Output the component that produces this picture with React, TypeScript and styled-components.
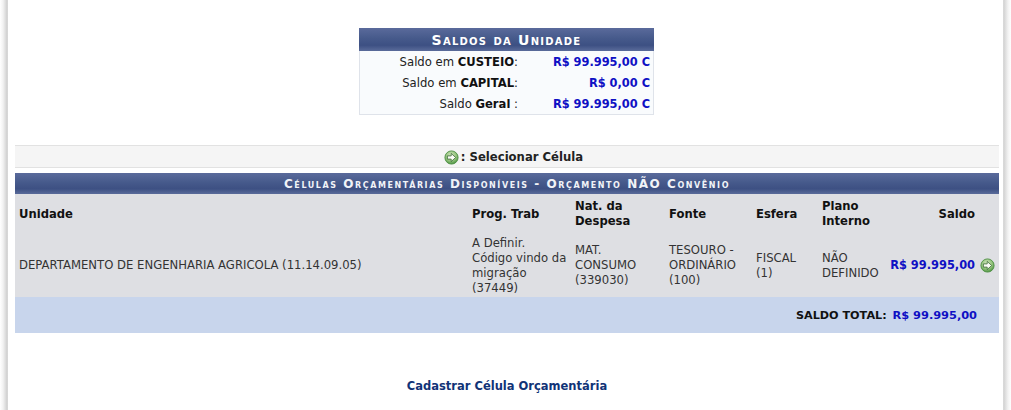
import React from "react";
import styled, { createGlobalStyle } from "styled-components";

const Global = createGlobalStyle`
  html, body { margin: 0; padding: 0; background: #fff; }
  body { font-family: "DejaVu Sans", Verdana, sans-serif; font-size: 11.65px; color: #222; }
`;

const Page = styled.div`
  width: 1011px;
  height: 410px;
  overflow: hidden;
  box-sizing: border-box;
  display: flex;
  flex-direction: column;
  background: linear-gradient(to right, #fff 0, #f2f2f2 3px, #d0d0d0 7px, #ddd 8px, #fff 8px, #fff 1003px, #ddd 1003px, #d4d4d4 1004px, #f2f2f2 1008px, #fff 1011px);
  padding: 28px 12px 0 15px;
`;

const SummaryBox = styled.div`
  width: 293px;
  margin: 0 0 0 344px;
  border: 1px solid #dfe3ea;
  border-top: 0;
  background: #f9fbfd;
  height: 86px;
`;

const SummaryTitle = styled.div`
  margin: 0 -1px 1px;
  height: 23px;
  line-height: 24px;
  text-align: center;
  color: #fff;
  font-weight: bold;
  font-size: 14px;
  font-variant: small-caps;
  letter-spacing: 1.25px;
  background: linear-gradient(to bottom, #5a6a9b 0, #465a8b 45%, #3d5083 75%, #5a6b9a 100%);
`;

const SummaryRow = styled.div`
  display: grid;
  grid-template-columns: 158px 132px;
  height: 21px;
  line-height: 21px;
`;

const SummaryLabel = styled.span`
  text-align: right;
  color: #222;
  b { color: #111; font-size: 11.6px; }
`;

const Money = styled.span`
  text-align: right;
  color: #0f10c4;
  font-weight: bold;
  font-size: 11.4px;
`;

const LegendBar = styled.div`
  margin-top: 30px;
  height: 20px;
  padding: 1px 0 0 13px;
  border-top: 1px solid #e2e2e2;
  border-bottom: 1px solid #e2e2e2;
  background: #f5f5f5;
  display: flex;
  align-items: center;
  justify-content: center;
  gap: 2px;
  font-weight: bold;
  color: #222;
  box-sizing: content-box;
`;

const ListTitle = styled.div`
  margin-top: 5px;
  height: 21px;
  line-height: 22px;
  text-align: center;
  color: #f1f3f8;
  font-weight: bold;
  font-size: 12px;
  font-variant: small-caps;
  letter-spacing: 1.56px;
  background: linear-gradient(to bottom, #5a6a9b 0, #465a8b 45%, #3d5083 75%, #5a6b9a 100%);
`;

const Table = styled.table`
  width: 984px;
  border-collapse: collapse;
  table-layout: fixed;
  background: #dedfe3;
`;

const Th = styled.th<{ $w?: number; $right?: boolean }>`
  width: ${(p) => (p.$w ? `${p.$w}px` : "auto")};
  text-align: ${(p) => (p.$right ? "right" : "left")};
  padding: 4px;
  padding-right: ${(p) => (p.$right ? "24px" : "4px")};
  height: 32px;
  line-height: 15px;
  font-weight: bold;
  font-size: 11.6px;
  color: #111;
`;

const Td = styled.td`
  padding: 0 4px;
  height: 63px;
  line-height: 15px;
  color: #333;
  vertical-align: middle;
`;

const FootRow = styled.tr`
  background: #c8d5ec;
`;

const FootCell = styled.td`
  height: 36px;
  padding: 0 22px 0 4px;
  text-align: right;
  font-weight: bold;
  font-size: 11.2px;
  color: #111;
  span { color: #0f10c4; margin-left: 2px; font-size: 11.35px; }
`;

const SaldoCell = styled.div`
  display: flex;
  justify-content: flex-end;
  align-items: center;
  gap: 5px;
  font-weight: bold;
  font-size: 11.4px;
  white-space: nowrap;
  color: #0f10c4;
`;

const Footer = styled.div`
  margin-top: 46px;
  text-align: center;
  a {
    color: #113377;
    font-weight: bold;
    font-size: 11.5px;
    text-decoration: none;
  }
`;

const GoIcon = () => (
  <svg width="15" height="15" viewBox="0 0 15 15" style={{ flex: "none" }}>
    <defs>
      <radialGradient id="g" cx="45%" cy="35%" r="70%">
        <stop offset="0" stopColor="#d4e8c0" />
        <stop offset="0.6" stopColor="#8fc078" />
        <stop offset="1" stopColor="#3f8a38" />
      </radialGradient>
    </defs>
    <circle cx="7.5" cy="7.5" r="6.6" fill="url(#g)" stroke="#4f9145" strokeWidth="0.9" />
    <path d="M3.4 5.9h3.8V3.4L11.6 7.5 7.2 11.6V9.1H3.4z" fill="#fbfbf6" stroke="#3c6b38" strokeWidth="0.8" strokeLinejoin="round" />
  </svg>
);

export default function App() {
  return (
    <>
      <Global />
      <Page>
        <SummaryBox>
          <SummaryTitle>Saldos da Unidade</SummaryTitle>
          <SummaryRow>
            <SummaryLabel>Saldo em <b>CUSTEIO</b>:</SummaryLabel>
            <Money>R$ 99.995,00 C</Money>
          </SummaryRow>
          <SummaryRow>
            <SummaryLabel>Saldo em <b>CAPITAL</b>:</SummaryLabel>
            <Money>R$ 0,00 C</Money>
          </SummaryRow>
          <SummaryRow>
            <SummaryLabel>Saldo <b>Geral</b> :</SummaryLabel>
            <Money>R$ 99.995,00 C</Money>
          </SummaryRow>
        </SummaryBox>
        <LegendBar>
          <GoIcon />
          <span>: Selecionar Célula</span>
        </LegendBar>
        <ListTitle>Células Orçamentárias Disponíveis - Orçamento NÃO Convênio</ListTitle>
        <Table>
          <thead>
            <tr>
              <Th $w={445}>Unidade</Th>
              <Th $w={95}>Prog. Trab</Th>
              <Th $w={86}>Nat. da Despesa</Th>
              <Th $w={79}>Fonte</Th>
              <Th $w={58}>Esfera</Th>
              <Th $w={59}>Plano Interno</Th>
              <Th $right>Saldo</Th>
            </tr>
          </thead>
          <tbody>
            <tr>
              <Td>DEPARTAMENTO DE ENGENHARIA AGRICOLA (11.14.09.05)</Td>
              <Td>A Definir. Código vindo da migração (37449)</Td>
              <Td>MAT. CONSUMO (339030)</Td>
              <Td>TESOURO - ORDINÁRIO (100)</Td>
              <Td>FISCAL (1)</Td>
              <Td>NÃO DEFINIDO</Td>
              <Td>
                <SaldoCell>
                  R$ 99.995,00
                  <GoIcon />
                </SaldoCell>
              </Td>
            </tr>
            <FootRow>
              <FootCell colSpan={7}>
                SALDO TOTAL: <span>R$ 99.995,00</span>
              </FootCell>
            </FootRow>
          </tbody>
        </Table>
        <Footer>
          <a href="#">Cadastrar Célula Orçamentária</a>
        </Footer>
      </Page>
    </>
  );
}
